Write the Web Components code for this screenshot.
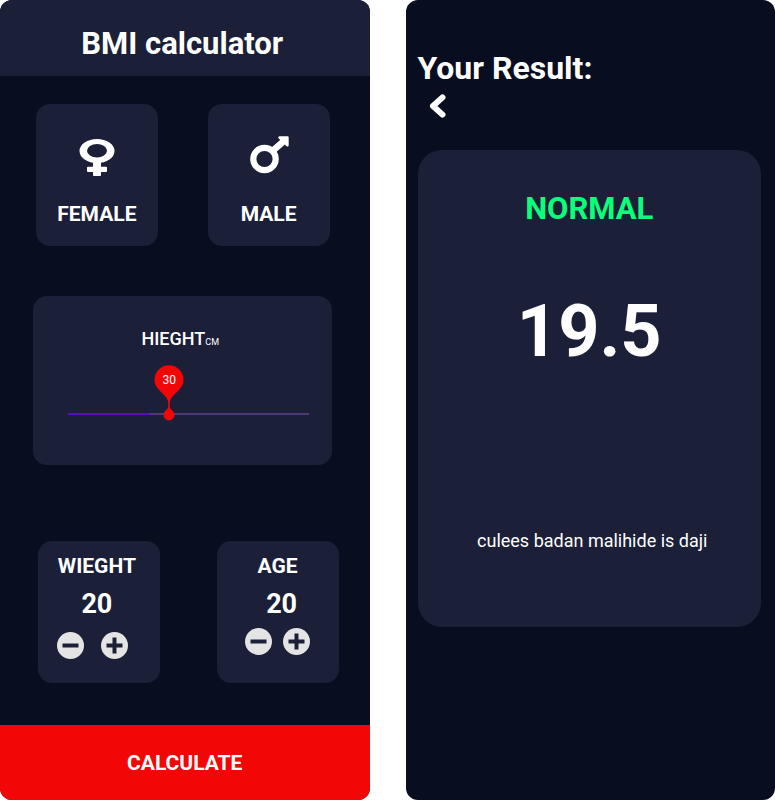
<!DOCTYPE html>
<html lang="en">
<head>
<meta charset="utf-8">
<meta name="viewport" content="width=device-width, initial-scale=1">
<title>BMI calculator</title>
<style>
  :root {
    --night: #080d1f;
    --panel: #1b1f37;
    --red: #f20606;
    --green: #0aff7b;
  }
  body {
    margin: 0;
    background: #fff;
    color: #fff;
    font-family: Roboto, "Liberation Sans", sans-serif;
    display: grid;
    grid-template-columns: 1fr 1fr;
    gap: 36px;
    min-height: 100vh;
  }
</style>
</head>
<body>
<bmi-form></bmi-form>
<bmi-result></bmi-result>

<script>
class Base extends HTMLElement {
  constructor() {
    super();
    this.attachShadow({ mode: "open" });
  }
  connectedCallback() {
    this.shadowRoot.innerHTML = "<style>*{box-sizing:border-box}button{font:inherit;color:inherit;border:0;background:none;padding:0;cursor:pointer}svg{display:block}</style>" + this.view();
    this.ready();
  }
  ready() {}
}

customElements.define("gender-card", class extends Base {
  view() {
    const art = {
      female: `<path fill="#fff" fill-rule="evenodd" d="M20 3a17.500 12 0 0 1 0 24a17.500 12 0 0 1 0-24zM20 8a10 6.800 0 0 0 0 13.600a10 6.800 0 0 0 0-13.600z"/>
        <path fill="#fff" d="M16 25h8v5.700h5q1 0 1 1v3.300q0 1-1 1h-5v3q0 1-1 1h-6q-1 0-1-1v-3h-5q-1 0-1-1v-3.300q0-1 1-1h5z"/>`,
      male: `<circle cx="15.500" cy="23" r="11.200" fill="none" stroke="#fff" stroke-width="6.200"/>
        <path d="M23.500 15L35.500 4.500" stroke="#fff" stroke-width="6.400"/>
        <path fill="#fff" d="M30.300 .3h8.200q1.200 0 1.200 1.200v7.800q0 1.300-1.200 1.300q-.6 0-1.100-.5L29.500 2.300q-.9-1.500.8-2z"/>`
    };
    return `<style>
      :host { display: block; }
      button { width: 100%; display: flex; flex-direction: column; align-items: center; gap: 25px;
        padding: 32px 0 19px; border-radius: 14px; background: var(--panel);
        font-size: 21px; line-height: 26px; font-weight: 700; }
    </style>
    <button type="button"><svg width="40" height="40" viewBox="0 0 40 40" aria-hidden="true">${art[this.getAttribute("kind")]}</svg><slot></slot></button>`;
  }
});

customElements.define("height-card", class extends Base {
  view() {
    return `<style>
      :host { display: block; background: var(--panel); border-radius: 14px; padding: 32px 23px 41px 35px; }
      label { display: flex; justify-content: center; align-items: baseline; padding-right: 16px;
        font-size: 18px; line-height: 22px; font-weight: 500; }
      small { font-size: 9px; font-weight: 400; }
      .rail { position: relative; padding-top: 51px; --at: 0.417; }
      input { appearance: none; -webkit-appearance: none; display: block; width: 100%; height: 20px; margin: 0; background: none; }
      input::-webkit-slider-runnable-track { height: 2px;
        background: linear-gradient(90deg, #5a0bc4 34%, #4d3a74 34%); }
      input::-webkit-slider-thumb { -webkit-appearance: none; width: 12px; height: 12px; margin-top: -5px;
        border-radius: 50%; background: none; }
      .pin { position: absolute; bottom: 3px; width: 30px; height: 56px; pointer-events: none;
        left: calc(6px + (100% - 12px) * var(--at) - 15px); }
      .pin svg { position: absolute; inset: 0; }
      output { position: absolute; left: 0; right: 0; top: 7px; text-align: center; font-size: 12px; line-height: 16px; }
    </style>
    <label for="h">HIEGHT<small>CM</small></label>
    <div class="rail">
      <input id="h" type="range" min="0" max="72" value="30">
      <div class="pin">
        <svg width="30" height="56" viewBox="0 0 30 56" aria-hidden="true"><path fill="#f20606" d="M15 .2a14.500 14.500 0 0 1 14.500 14.500c0 4.500-2 7.500-5.500 11.300C19 31 16 33 15.800 38v4c.2 1.500 1.500 2.500 3 4a5.500 5.500 0 1 1-7.600 0c1.500-1.500 2.800-2.500 3-4v-4C14 33 11 31 6 26C2.500 22.200.5 19.200.5 14.700A14.500 14.500 0 0 1 15 .2z"/></svg>
        <output for="h">30</output>
      </div>
    </div>`;
  }
  ready() {
    const input = this.shadowRoot.querySelector("input");
    input.addEventListener("input", () => {
      this.shadowRoot.querySelector("output").value = input.value;
      this.shadowRoot.querySelector(".rail").style.setProperty("--at", input.value / input.max);
    });
  }
});

customElements.define("count-card", class extends Base {
  view() {
    const knob = (label, d) => `<button type="button" aria-label="${label}"><svg width="27" height="27" viewBox="0 0 27 27"><circle cx="13.500" cy="13.500" r="13.500" fill="#e4e4e4"/><path d="${d}" stroke="#1b1f37" stroke-width="4"/></svg></button>`;
    return `<style>
      :host { display: flex; flex-direction: column; align-items: center; background: var(--panel); border-radius: 14px;
        padding: 12px 4px 0 0; }
      .name { font-size: 21px; line-height: 26px; font-weight: 700; }
      output { font-size: 27px; line-height: 32px; font-weight: 700; margin-top: 9px; }
      .steps { display: flex; align-self: stretch; padding: 12px 0 24px 19px; gap: 17px; }
      :host([compact]) { padding: 12px 0 0; }
      :host([compact]) output { padding-left: 8px; }
      :host([compact]) .steps { justify-content: center; gap: 11px; padding: 8px 0 28px; }
    </style>
    <span class="name"><slot></slot></span>
    <output>20</output>
    <div class="steps">${knob("Decrease", "M5.500 13.500h16")}${knob("Increase", "M5.500 13.500h16M13.500 5.500v16")}</div>`;
  }
  ready() {
    const out = this.shadowRoot.querySelector("output");
    this.shadowRoot.querySelectorAll("button").forEach((b, i) =>
      b.addEventListener("click", () => { out.value = Math.max(0, +out.value + (i ? 1 : -1)); }));
  }
});

customElements.define("bmi-form", class extends Base {
  view() {
    return `<style>
      :host { display: flex; flex-direction: column; background: var(--night); border-radius: 12px; overflow: hidden; }
      header { background: var(--panel); padding: 25px 5px 13px 0; text-align: center; }
      h1 { margin: 0; font-size: 31px; line-height: 38px; font-weight: 700; }
      .pair { display: grid; grid-template-columns: 1fr 1fr; }
      .gender { gap: 50px; padding: 28px 40px 50px 36px; }
      height-card { margin: 0 38px 76px 33px; }
      .counts { gap: 57px; padding: 0 31px 42px 38px; }
      .go { margin-top: auto; background: var(--red); padding: 25px 0 24px; font-size: 21px; line-height: 26px; font-weight: 700; }
    </style>
    <header><h1>BMI calculator</h1></header>
    <div class="pair gender"><gender-card kind="female">FEMALE</gender-card><gender-card kind="male">MALE</gender-card></div>
    <height-card></height-card>
    <div class="pair counts"><count-card>WIEGHT</count-card><count-card compact>AGE</count-card></div>
    <button class="go" type="button">CALCULATE</button>`;
  }
});

customElements.define("bmi-result", class extends Base {
  view() {
    return `<style>
      :host { display: block; background: var(--night); border-radius: 12px; padding: 49px 14px 24px 12px; }
      h1 { margin: 0; font-size: 32px; line-height: 38px; font-weight: 700; }
      .back { display: block; margin: 7px 0 32px 11px; }
      section { background: var(--panel); border-radius: 24px; padding: 40px 0 75px; text-align: center; }
      h2 { margin: 0; font-size: 31px; line-height: 38px; font-weight: 700; color: var(--green); }
      .score { margin: 62px 0 0; font-size: 72px; line-height: 84px; font-weight: 700; }
      .note { margin: 156px 0 0; padding-left: 6px; font-size: 18px; line-height: 22px; }
    </style>
    <h1>Your Result:</h1>
    <button class="back" type="button" aria-label="Back"><svg width="17" height="24" viewBox="0 0 17 24"><path d="M13.500 3.400L4 12l9.500 8.600" fill="none" stroke="#fff" stroke-width="6" stroke-linecap="round" stroke-linejoin="round"/></svg></button>
    <section>
      <h2>NORMAL</h2>
      <p class="score">19.5</p>
      <p class="note">culees badan malihide is daji</p>
    </section>`;
  }
});
</script>
</body>
</html>
